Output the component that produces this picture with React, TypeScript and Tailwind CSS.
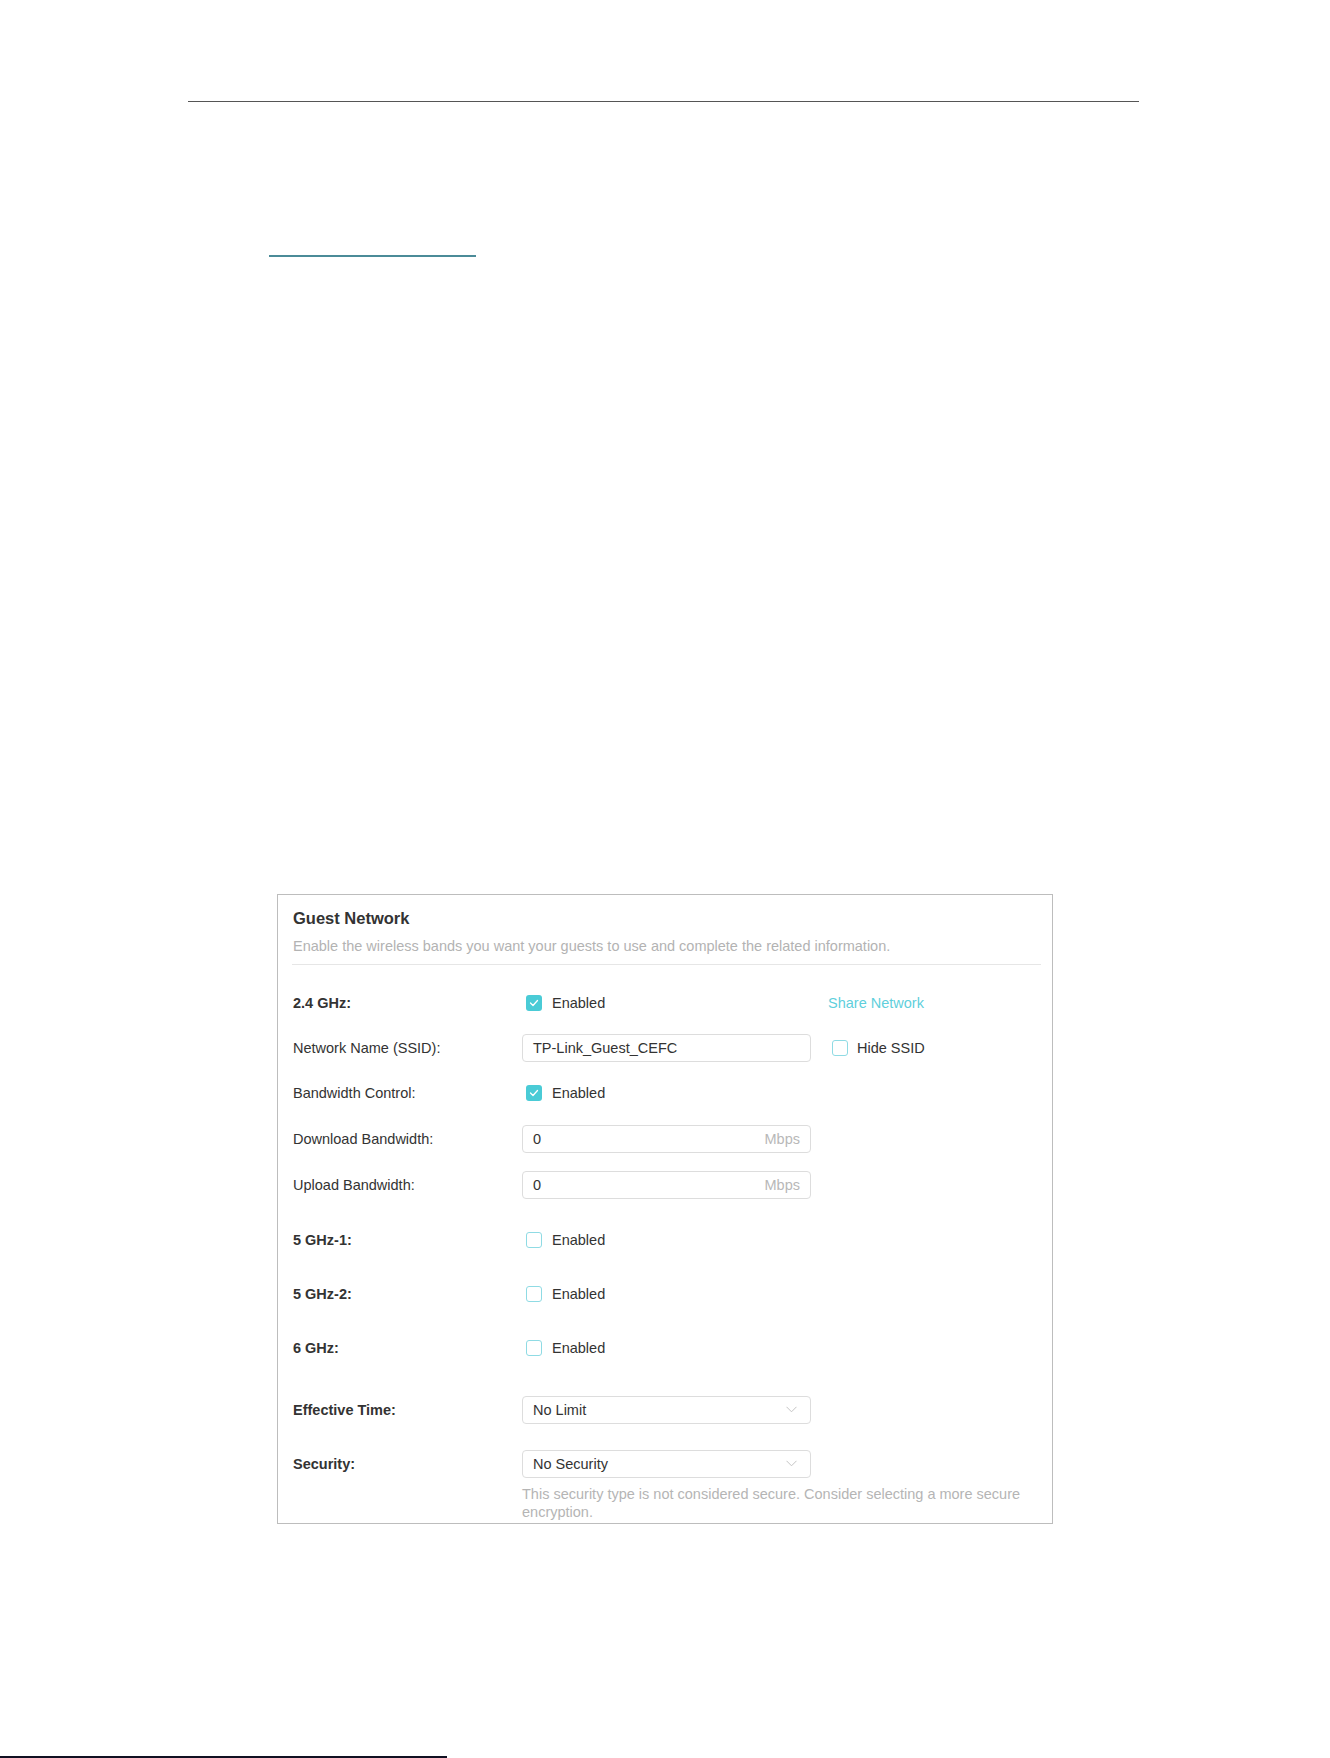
import React from "react";

const Check = ({ checked }: { checked: boolean }) =>
  checked ? (
    <span className="flex h-[16px] w-[16px] items-center justify-center rounded-[3px] bg-[#4acbd6]">
      <svg width="10" height="8" viewBox="0 0 10 8" fill="none">
        <polyline points="1.5,4 4,6.5 8.5,1.5" stroke="#ffffff" strokeWidth="1.3" strokeLinecap="round" strokeLinejoin="round" />
      </svg>
    </span>
  ) : (
    <span className="block h-[16px] w-[16px] rounded-[3px] border-[1.5px] border-[#8fdbe4] bg-white" />
  );

const Label = ({ children, bold }: { children: React.ReactNode; bold?: boolean }) => (
  <div className={`w-[229px] shrink-0 text-[14.5px] leading-[20px] text-[#333333] ${bold ? "font-bold" : ""}`}>{children}</div>
);

const Enabled = ({ checked }: { checked: boolean }) => (
  <div className="flex w-[289px] items-center gap-[10px] pl-[4px]">
    <Check checked={checked} />
    <span className="text-[14.5px] leading-[20px] text-[#333333]">Enabled</span>
  </div>
);

const TextBox = ({ value, unit }: { value: string; unit?: string }) => (
  <div className="flex h-[28px] w-[289px] items-center justify-between rounded-[4px] border border-[#dddddd] bg-white pl-[10px] pr-[10px]">
    <span className="text-[14.5px] leading-[20px] text-[#333333]">{value}</span>
    {unit && <span className="text-[14.5px] leading-[20px] text-[#b8b8b8]">{unit}</span>}
  </div>
);

const SelectBox = ({ value }: { value: string }) => (
  <div className="flex h-[28px] w-[289px] items-center justify-between rounded-[4px] border border-[#dddddd] bg-white pl-[10px] pr-[13px]">
    <span className="text-[14.5px] leading-[20px] text-[#333333]">{value}</span>
    <svg width="11" height="7" viewBox="0 0 11 7" fill="none">
      <polyline points="0.5,0.8 5.5,5.8 10.5,0.8" stroke="#c4c4c4" strokeWidth="1" />
    </svg>
  </div>
);

export default function App() {
  return (
    <div className="relative flex h-[1758px] w-[1330px] flex-col overflow-hidden bg-white" style={{ fontFamily: "'Liberation Sans', Arial, sans-serif" }}>
      <div className="ml-[188px] mt-[101px] h-[1px] w-[951px] bg-[#555555]" />
      <div className="ml-[269px] mt-[153px] h-[1.5px] w-[207px] bg-[#4b8b98]" />

      <div className="ml-[277px] mt-[637px] flex h-[631px] w-[776px] flex-col border border-[#bdbdbd] pl-[15px] pr-[10px] pt-[13px]">
        <div className="text-[16.5px] font-bold leading-[20px] text-[#333333]">Guest Network</div>
        <div className="mt-[8px] text-[14.5px] leading-[20px] text-[#b3b3b3]">
          Enable the wireless bands you want your guests to use and complete the related information.
        </div>
        <div className="-ml-px mt-[8px] h-[1px] w-[749px] bg-[#e6e6e6]" />

        <div className="mt-[24px] flex h-[28px] items-center">
          <Label bold>2.4 GHz:</Label>
          <Enabled checked />
          <span className="ml-[17px] text-[14.5px] leading-[20px] text-[#5fcfdc]">Share Network</span>
        </div>

        <div className="mt-[17px] flex h-[28px] items-center">
          <Label>Network Name (SSID):</Label>
          <TextBox value="TP-Link_Guest_CEFC" />
          <div className="ml-[21px] flex items-center gap-[9px]">
            <Check checked={false} />
            <span className="text-[14.5px] leading-[20px] text-[#333333]">Hide SSID</span>
          </div>
        </div>

        <div className="mt-[17px] flex h-[28px] items-center">
          <Label>Bandwidth Control:</Label>
          <Enabled checked />
        </div>

        <div className="mt-[18px] flex h-[28px] items-center">
          <Label>Download Bandwidth:</Label>
          <TextBox value="0" unit="Mbps" />
        </div>

        <div className="mt-[18px] flex h-[28px] items-center">
          <Label>Upload Bandwidth:</Label>
          <TextBox value="0" unit="Mbps" />
        </div>

        <div className="mt-[27px] flex h-[28px] items-center">
          <Label bold>5 GHz-1:</Label>
          <Enabled checked={false} />
        </div>

        <div className="mt-[26px] flex h-[28px] items-center">
          <Label bold>5 GHz-2:</Label>
          <Enabled checked={false} />
        </div>

        <div className="mt-[26px] flex h-[28px] items-center">
          <Label bold>6 GHz:</Label>
          <Enabled checked={false} />
        </div>

        <div className="mt-[34px] flex h-[28px] items-center">
          <Label bold>Effective Time:</Label>
          <SelectBox value="No Limit" />
        </div>

        <div className="mt-[26px] flex h-[28px] items-center">
          <Label bold>Security:</Label>
          <SelectBox value="No Security" />
        </div>

        <div className="ml-[229px] mt-[7px] w-[515px] text-[14.5px] leading-[18px] text-[#b5b5b5]">
          This security type is not considered secure. Consider selecting a more secure encryption.
        </div>
      </div>

      <div className="mt-[232px] h-[2px] w-[447px] bg-[#111122]" />
    </div>
  );
}
